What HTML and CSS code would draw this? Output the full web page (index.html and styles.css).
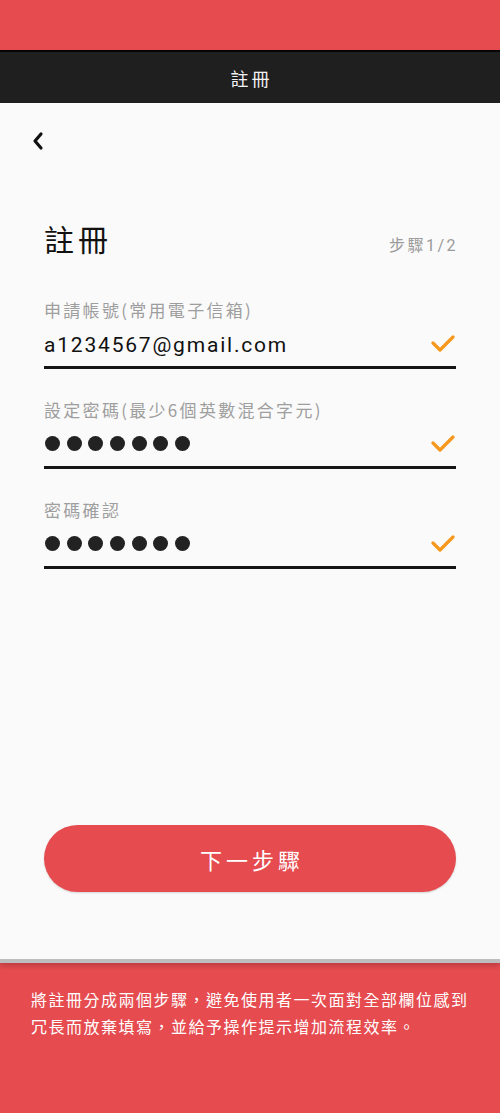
FILE: index.html
```html
<!DOCTYPE html>
<html lang="zh-Hant">
<head>
<meta charset="utf-8">
<title>註冊</title>
<link rel="stylesheet" href="styles.css">
</head>
<body>
<div class="top-band"></div>
<div class="phone">
  <header class="app-bar">註冊</header>
  <main class="screen">
    <button class="back" aria-label="返回">
      <svg width="24" height="24" viewBox="0 0 24 24"><polyline points="14,5 8,12 14,19" fill="none" stroke="#111" stroke-width="3.2" stroke-linecap="round" stroke-linejoin="round"/></svg>
    </button>
    <div class="title-row">
      <h1 class="title">註冊</h1>
      <span class="step">步驟1/2</span>
    </div>
    <div class="field field-first">
      <div class="label">申請帳號(常用電子信箱)</div>
      <div class="input-row">
        <span class="value">a1234567@gmail.com</span>
        <svg class="check" width="24" height="17" viewBox="0 0 24 17"><polyline points="2,8 9,15 22,2" fill="none" stroke="#f7981d" stroke-width="3.2" stroke-linecap="round" stroke-linejoin="round"/></svg>
      </div>
    </div>
    <div class="field">
      <div class="label">設定密碼(最少6個英數混合字元)</div>
      <div class="input-row">
        <span class="dots"><i></i><i></i><i></i><i></i><i></i><i></i><i></i></span>
        <svg class="check" width="24" height="17" viewBox="0 0 24 17"><polyline points="2,8 9,15 22,2" fill="none" stroke="#f7981d" stroke-width="3.2" stroke-linecap="round" stroke-linejoin="round"/></svg>
      </div>
    </div>
    <div class="field">
      <div class="label">密碼確認</div>
      <div class="input-row">
        <span class="dots"><i></i><i></i><i></i><i></i><i></i><i></i><i></i></span>
        <svg class="check" width="24" height="17" viewBox="0 0 24 17"><polyline points="2,8 9,15 22,2" fill="none" stroke="#f7981d" stroke-width="3.2" stroke-linecap="round" stroke-linejoin="round"/></svg>
      </div>
    </div>
    <button class="next">下一步驟</button>
  </main>
</div>
<p class="caption">將註冊分成兩個步驟，避免使用者一次面對全部欄位感到冗長而放棄填寫，並給予操作提示增加流程效率。</p>
</body>
</html>
```
FILE: styles.css
```css
html, body {
  margin: 0;
  padding: 0;
}
body {
  width: 500px;
  height: 1113px;
  background: #e54b4f;
  font-family: Roboto, "Noto Sans CJK TC", sans-serif;
  overflow: hidden;
}
.top-band {
  height: 50px;
  background: #e54b4f;
}
.phone {
  border-top: 2px solid #050505;
  border-bottom: 4px solid #bdbdbd;
  box-shadow: 0 3px 5px rgba(0, 0, 0, 0.18);
  position: relative;
}
.app-bar {
  height: 51px;
  background: #1f1f1f;
  color: #f2f2f2;
  font-size: 18px;
  letter-spacing: 3px;
  display: flex;
  align-items: center;
  justify-content: center;
  padding-left: 3px;
}
.screen {
  background: #fafafa;
  height: 856px;
  box-sizing: border-box;
  padding: 26px 44px 0 44px;
  display: flex;
  flex-direction: column;
}
.back {
  width: 24px;
  height: 24px;
  padding: 0;
  margin-left: -17px;
  border: none;
  background: none;
  display: block;
}
.back svg { display: block; }
.title-row {
  margin-top: 68px;
  display: flex;
  justify-content: space-between;
  align-items: baseline;
}
.title {
  margin: 0;
  font-weight: 400;
  font-size: 30px;
  line-height: 40px;
  letter-spacing: 4px;
  color: #111;
}
.step {
  font-size: 16px;
  color: #9a9a9a;
  letter-spacing: 2.5px;
  margin-right: -2px;
}
.field {
  margin-top: 29px;
}
.field-first { margin-top: 37px; }
.label {
  font-family: "Noto Sans CJK TC", sans-serif;
  font-size: 17px;
  line-height: 24px;
  color: #9e9e9e;
  letter-spacing: 2.3px;
}
.input-row {
  height: 44px;
  border-bottom: 3px solid #151515;
  display: flex;
  align-items: center;
  justify-content: space-between;
}
.value {
  font-size: 21px;
  letter-spacing: 1.8px;
  color: #111;
  margin-top: 1px;
}
.check {
  display: block;
  margin-right: 1px;
  margin-top: -2px;
}
.dots {
  display: flex;
  gap: 6.7px;
  margin-left: 1px;
  margin-top: -1px;
}
.dots i {
  display: block;
  width: 15px;
  height: 15px;
  border-radius: 50%;
  background: #222;
}
.next {
  margin-top: 256px;
  height: 67px;
  border: none;
  border-radius: 34px;
  background: #e54b4f;
  color: #fff;
  font-family: Roboto, "Noto Sans CJK TC", sans-serif;
  font-size: 22px;
  letter-spacing: 4px;
  padding: 0 0 0 4px;
  box-shadow: 0 1px 2px rgba(0, 0, 0, 0.15);
}
.caption {
  margin: 0;
  padding: 24px 25px 0 31px;
  color: #fff;
  font-size: 16px;
  line-height: 27px;
  letter-spacing: 1.5px;
}
```
